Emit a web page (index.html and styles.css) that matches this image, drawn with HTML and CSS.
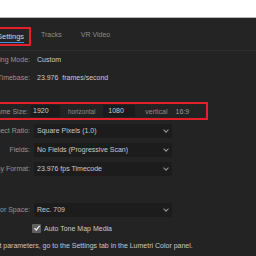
FILE: index.html
```html
<!DOCTYPE html>
<html lang="en">

<head>
    <meta charset="UTF-8" />
    <title>Sequence Settings</title>
    <link rel="stylesheet" href="styles.css">
</head>

<body>
    <div class="top"></div>
    <div class="panel">
        <div class="tabs">
            <div class="tab active-box"><span class="tab-label active">Settings</span></div>
            <div class="tab tracks">Tracks</div>
            <div class="tab vr">VR Video</div>
        </div>

        <div class="rows">
            <div class="row r-mode">
                <span class="label">Editing Mode:</span>
                <span class="value">Custom</span>
            </div>
            <div class="row">
                <span class="label">Timebase:</span>
                <span class="value">23.976&nbsp; frames/second</span>
            </div>
            <div class="row r-frame">
                <span class="label">Frame Size:</span>
                <div class="frame-fields">
                    <span class="num w1">1920</span>
                    <span class="unit">horizontal</span>
                    <span class="num w2">1080</span>
                    <span class="unit vert">vertical</span>
                    <span class="ratio">16:9</span>
                </div>
            </div>
            <div class="row">
                <span class="label">Pixel Aspect Ratio:</span>
                <div class="select">Square Pixels (1.0)<span class="chev"></span></div>
            </div>
            <div class="row">
                <span class="label">Fields:</span>
                <div class="select">No Fields (Progressive Scan)<span class="chev"></span></div>
            </div>
            <div class="row">
                <span class="label">Display Format:</span>
                <div class="select">23.976 fps Timecode<span class="chev"></span></div>
            </div>
            <div class="row r-color">
                <span class="label">Color Space:</span>
                <div class="select">Rec. 709<span class="chev"></span></div>
            </div>
            <div class="row">
                <span class="label"></span>
                <label class="check">
                    <span class="box">
                        <svg width="8" height="8" viewBox="0 0 8 8"><path d="M1.5 4.2 L3.3 6 L6.6 1.8" fill="none" stroke="#ececec" stroke-width="1.3"/></svg>
                    </span>
                    Auto Tone Map Media
                </label>
            </div>
            <div class="note">For other color management parameters, go to the Settings tab in the Lumetri Color panel.</div>
        </div>
    </div>
</body>

</html>
```

FILE: styles.css
```css
* {
    padding: 0;
    margin: 0;
    box-sizing: border-box;
}

body {
    background-color: #fff;
    width: 256px;
    height: 256px;
    overflow: hidden;
    font-family: 'Liberation Sans', Arial, sans-serif;
    font-size: 7px;
}

.top {
    height: 18px;
    border-bottom: 1px solid #b8b8b8;
}

.panel {
    background-color: #232323;
    height: 238px;
    overflow: hidden;
}

.tabs {
    display: flex;
    align-items: center;
    height: 33px;
    border-bottom: 1px solid #2e2e2e;
    background-color: #242424;
    margin-left: -20px;
}

.tab {
    color: #8c8c8c;
}

.tracks {
    margin-left: 10px;
}

.vr {
    margin-left: 19px;
}

.active-box {
    border: 2px solid #e3212a;
    height: 19px;
    width: 51px;
    display: flex;
    align-items: center;
    padding-left: 15px;
    margin-top: 4px;
}

.tab-label.active {
    color: #d6d6d6;
    font-size: 7.5px;
    border-bottom: 1px solid #3c8fdc;
    padding-bottom: 1px;
    margin-top: 2px;
}

.rows {
    margin-left: -70px;
}

.row {
    display: flex;
    align-items: center;
    height: 18px;
}

.r-mode {
    height: 16px;
}

.label {
    width: 100px;
    text-align: right;
    color: #959595;
    flex-shrink: 0;
}

.value {
    margin-left: 7px;
    color: #cacaca;
}

.r-frame {
    margin-top: 16px;
    width: 278px;
    border: 2px solid #e3212a;
}

.r-frame .label {
    width: 96px;
}

.frame-fields {
    display: flex;
    align-items: center;
}

.num {
    background-color: #1b1b1b;
    color: #cfcfcf;
    height: 12px;
    line-height: 12px;
}

.w1 {
    margin-left: 3px;
    width: 29px;
    padding-left: 2px;
}

.w2 {
    margin-left: 8px;
    width: 32px;
    padding-left: 5px;
}

.unit {
    color: #8e8e8e;
    font-size: 6.3px;
    margin-left: 8px;
}

.vert {
    margin-left: 10px;
    font-size: 7px;
}

.ratio {
    color: #9a9a9a;
    margin-left: 8px;
}

.select {
    margin-left: 4px;
    width: 138px;
    height: 14px;
    background-color: #1c1c1c;
    color: #cacaca;
    display: flex;
    align-items: center;
    padding-left: 3px;
    position: relative;
    margin-top: 1px;
}

.chev {
    position: absolute;
    right: 4px;
    top: 4px;
    width: 4px;
    height: 4px;
    border-right: 1px solid #9a9a9a;
    border-bottom: 1px solid #9a9a9a;
    transform: rotate(45deg);
}

.row + .row:not(.r-frame) {
    margin-top: 1px;
}

.r-color {
    margin-top: 23px !important;
}

.check {
    display: flex;
    align-items: center;
    gap: 3px;
    margin-left: 2px;
    color: #cacaca;
}

.box {
    width: 9px;
    height: 9px;
    background-color: #606060;
    border-radius: 1px;
    display: flex;
    align-items: center;
    justify-content: center;
}

.note {
    color: #c6c6c6;
    height: 18px;
    line-height: 18px;
    margin-left: -17px;
    white-space: nowrap;
}
```
